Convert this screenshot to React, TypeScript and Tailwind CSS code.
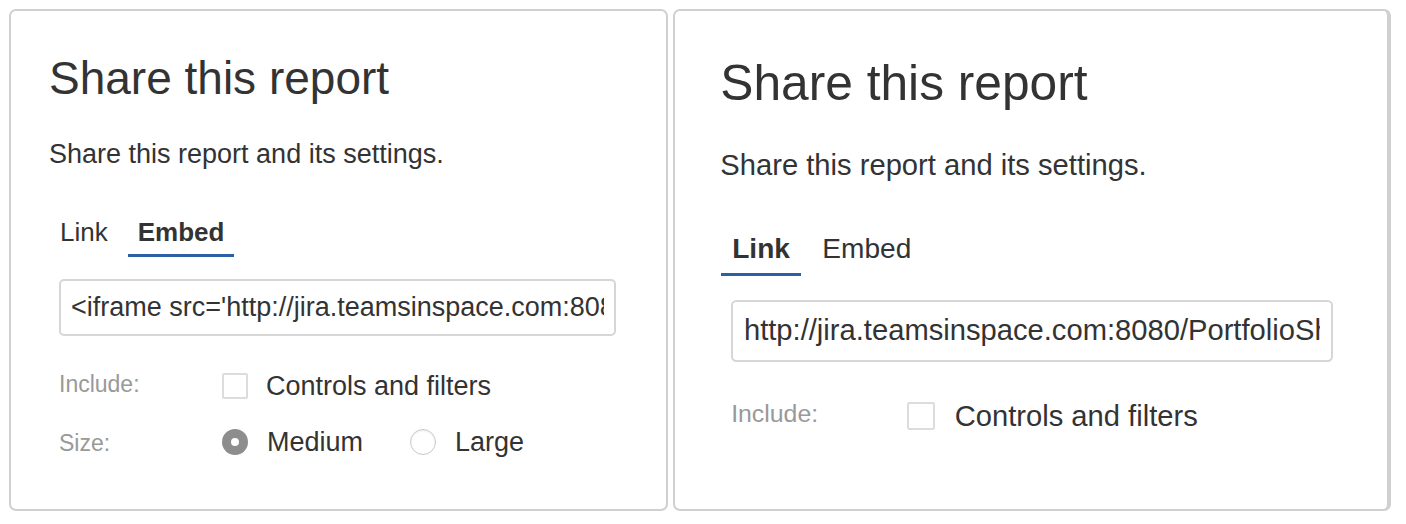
import React from "react";

type ContentProps = { active: "link" | "embed"; showSize: boolean; value: string };

function Tab({ label, active }: { label: string; active: boolean }) {
  return (
    <div
      className={
        active
          ? "px-[10px] pb-[7px] text-[26px] leading-[30px] font-bold border-b-[3px] border-[#2c60a6]"
          : "px-[10px] pb-[7px] text-[26px] leading-[30px] font-normal border-b-[3px] border-transparent"
      }
    >
      {label}
    </div>
  );
}

function Checkbox() {
  return <div className="h-[26px] w-[26px] shrink-0 rounded-[2px] border-2 border-[#dcdcdc] bg-white" />;
}

function Radio({ checked }: { checked: boolean }) {
  if (checked) {
    return (
      <div className="flex h-[26px] w-[26px] shrink-0 items-center justify-center rounded-full bg-[#8d8d8d]">
        <div className="h-[8px] w-[8px] rounded-full bg-white" />
      </div>
    );
  }
  return (
    <div className="h-[26px] w-[26px] shrink-0 rounded-full border-[1.5px] border-[#c9c9c9] bg-white shadow-[inset_0_1px_2px_rgba(0,0,0,0.08)]" />
  );
}

function ShareContent({ active, showSize, value }: ContentProps) {
  return (
    <div className="flex flex-col pl-[38px] pt-[41px] text-[#333] font-['Liberation_Sans',Arial,Helvetica,sans-serif]">
      <h1 className="text-[46px] leading-[52px] font-normal">Share this report</h1>
      <p className="mt-[35px] text-[27px] leading-[30px]">Share this report and its settings.</p>
      <div className="mt-[48px] ml-px flex gap-[10px]">
        <Tab label="Link" active={active === "link"} />
        <Tab label="Embed" active={active === "embed"} />
      </div>
      <div className="ml-[10px] flex flex-col">
        <input
          readOnly
          value={value}
          className="mt-[22px] h-[57px] w-[557px] rounded-[5px] border-2 border-[#d6d6d6] bg-white px-[10px] text-[27px] text-[#333] outline-none"
        />
        <div className="mt-[35px] flex items-start">
          <div className="w-[163px] text-[23px] leading-[26px] text-[#999]">Include:</div>
          <div className="flex h-[30px] items-center">
            <Checkbox />
            <span className="ml-[18px] text-[27px] leading-[30px]">Controls and filters</span>
          </div>
        </div>
        {showSize && (
          <div className="mt-[26px] flex items-start">
            <div className="mt-[3px] w-[163px] text-[23px] leading-[26px] text-[#999]">Size:</div>
            <div className="flex h-[30px] items-center">
              <Radio checked />
              <span className="ml-[19px] text-[27px] leading-[30px]">Medium</span>
              <div className="ml-[47px]">
                <Radio checked={false} />
              </div>
              <span className="ml-[19px] text-[27px] leading-[30px]">Large</span>
            </div>
          </div>
        )}
      </div>
    </div>
  );
}

export default function App() {
  return (
    <div className="flex h-[524px] w-[1406px] items-start gap-[5px] bg-white pl-[9px] pt-[9px]">
      <div className="h-[502px] w-[659px] shrink-0 overflow-hidden rounded-[7px] border-2 border-[#d0d0d0] bg-white">
        <ShareContent
          active="embed"
          showSize
          value="<iframe src='http://jira.teamsinspace.com:8080/PortfolioShare/report?id=1' width='800' height='600'></iframe>"
        />
      </div>
      <div className="h-[502px] w-[718px] shrink-0 overflow-hidden rounded-[7px] border-2 border-r-4 border-[#d0d0d0] bg-white">
        <div className="pl-[4px] [zoom:1.08]">
          <ShareContent
            active="link"
            showSize={false}
            value="http://jira.teamsinspace.com:8080/PortfolioShare/report?id=1"
          />
        </div>
      </div>
    </div>
  );
}
